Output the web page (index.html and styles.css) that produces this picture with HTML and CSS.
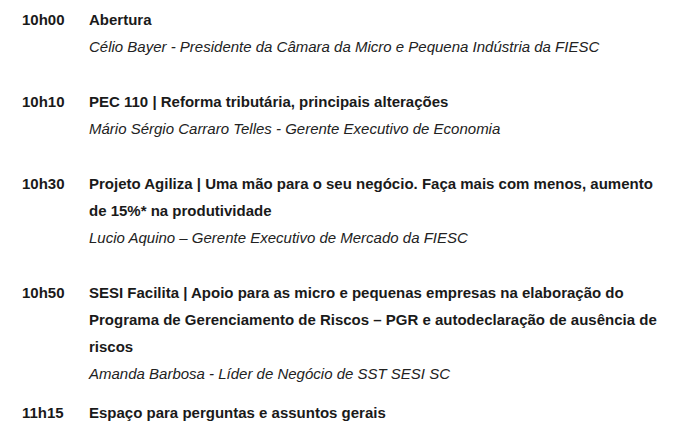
FILE: index.html
```html
<!DOCTYPE html>
<html lang="pt">
<head>
<meta charset="utf-8">
<link rel="stylesheet" href="styles.css">
</head>
<body>
<div class="page">
  <div class="agenda">
    <div class="item">
      <div class="time">10h00</div>
      <div class="body">
        <div class="title">Abertura</div>
        <div class="speaker">Célio Bayer - Presidente da Câmara da Micro e Pequena Indústria da FIESC</div>
      </div>
    </div>
    <div class="item">
      <div class="time">10h10</div>
      <div class="body">
        <div class="title">PEC 110 | Reforma tributária, principais alterações</div>
        <div class="speaker">Mário Sérgio Carraro Telles - Gerente Executivo de Economia</div>
      </div>
    </div>
    <div class="item">
      <div class="time">10h30</div>
      <div class="body">
        <div class="title">Projeto Agiliza | Uma mão para o seu negócio. Faça mais com menos, aumento<br>de 15%* na produtividade</div>
        <div class="speaker">Lucio Aquino – Gerente Executivo de Mercado da FIESC</div>
      </div>
    </div>
    <div class="item item-last">
      <div class="time">10h50</div>
      <div class="body">
        <div class="title">SESI Facilita | Apoio para as micro e pequenas empresas na elaboração do<br>Programa de Gerenciamento de Riscos – PGR e autodeclaração de ausência de<br>riscos</div>
        <div class="speaker">Amanda Barbosa - Líder de Negócio de SST SESI SC</div>
      </div>
    </div>
    <div class="item">
      <div class="time">11h15</div>
      <div class="body">
        <div class="title">Espaço para perguntas e assuntos gerais</div>
      </div>
    </div>
  </div>
  <div class="band"></div>
</div>
</body>
</html>
```
FILE: styles.css
```css
html, body {
  margin: 0;
  padding: 0;
  background: #ffffff;
}
.page {
  width: 682px;
  height: 447px;
  display: flex;
  flex-direction: column;
  overflow: hidden;
}
.agenda {
  flex: 1;
  padding: 6px 0 0 22px;
  font-family: "Liberation Sans", Arial, sans-serif;
  font-size: 15px;
  line-height: 27px;
  color: #1a1a1a;
}
.item {
  display: grid;
  grid-template-columns: 67px 593px;
  margin-bottom: 28px;
}
.item-last {
  margin-bottom: 12px;
}
.time {
  font-weight: bold;
}
.title {
  font-weight: bold;
  white-space: nowrap;
}
.speaker {
  font-style: italic;
  color: #222222;
}
.band {
  height: 5px;
  background: #eef2f1;
}
```
